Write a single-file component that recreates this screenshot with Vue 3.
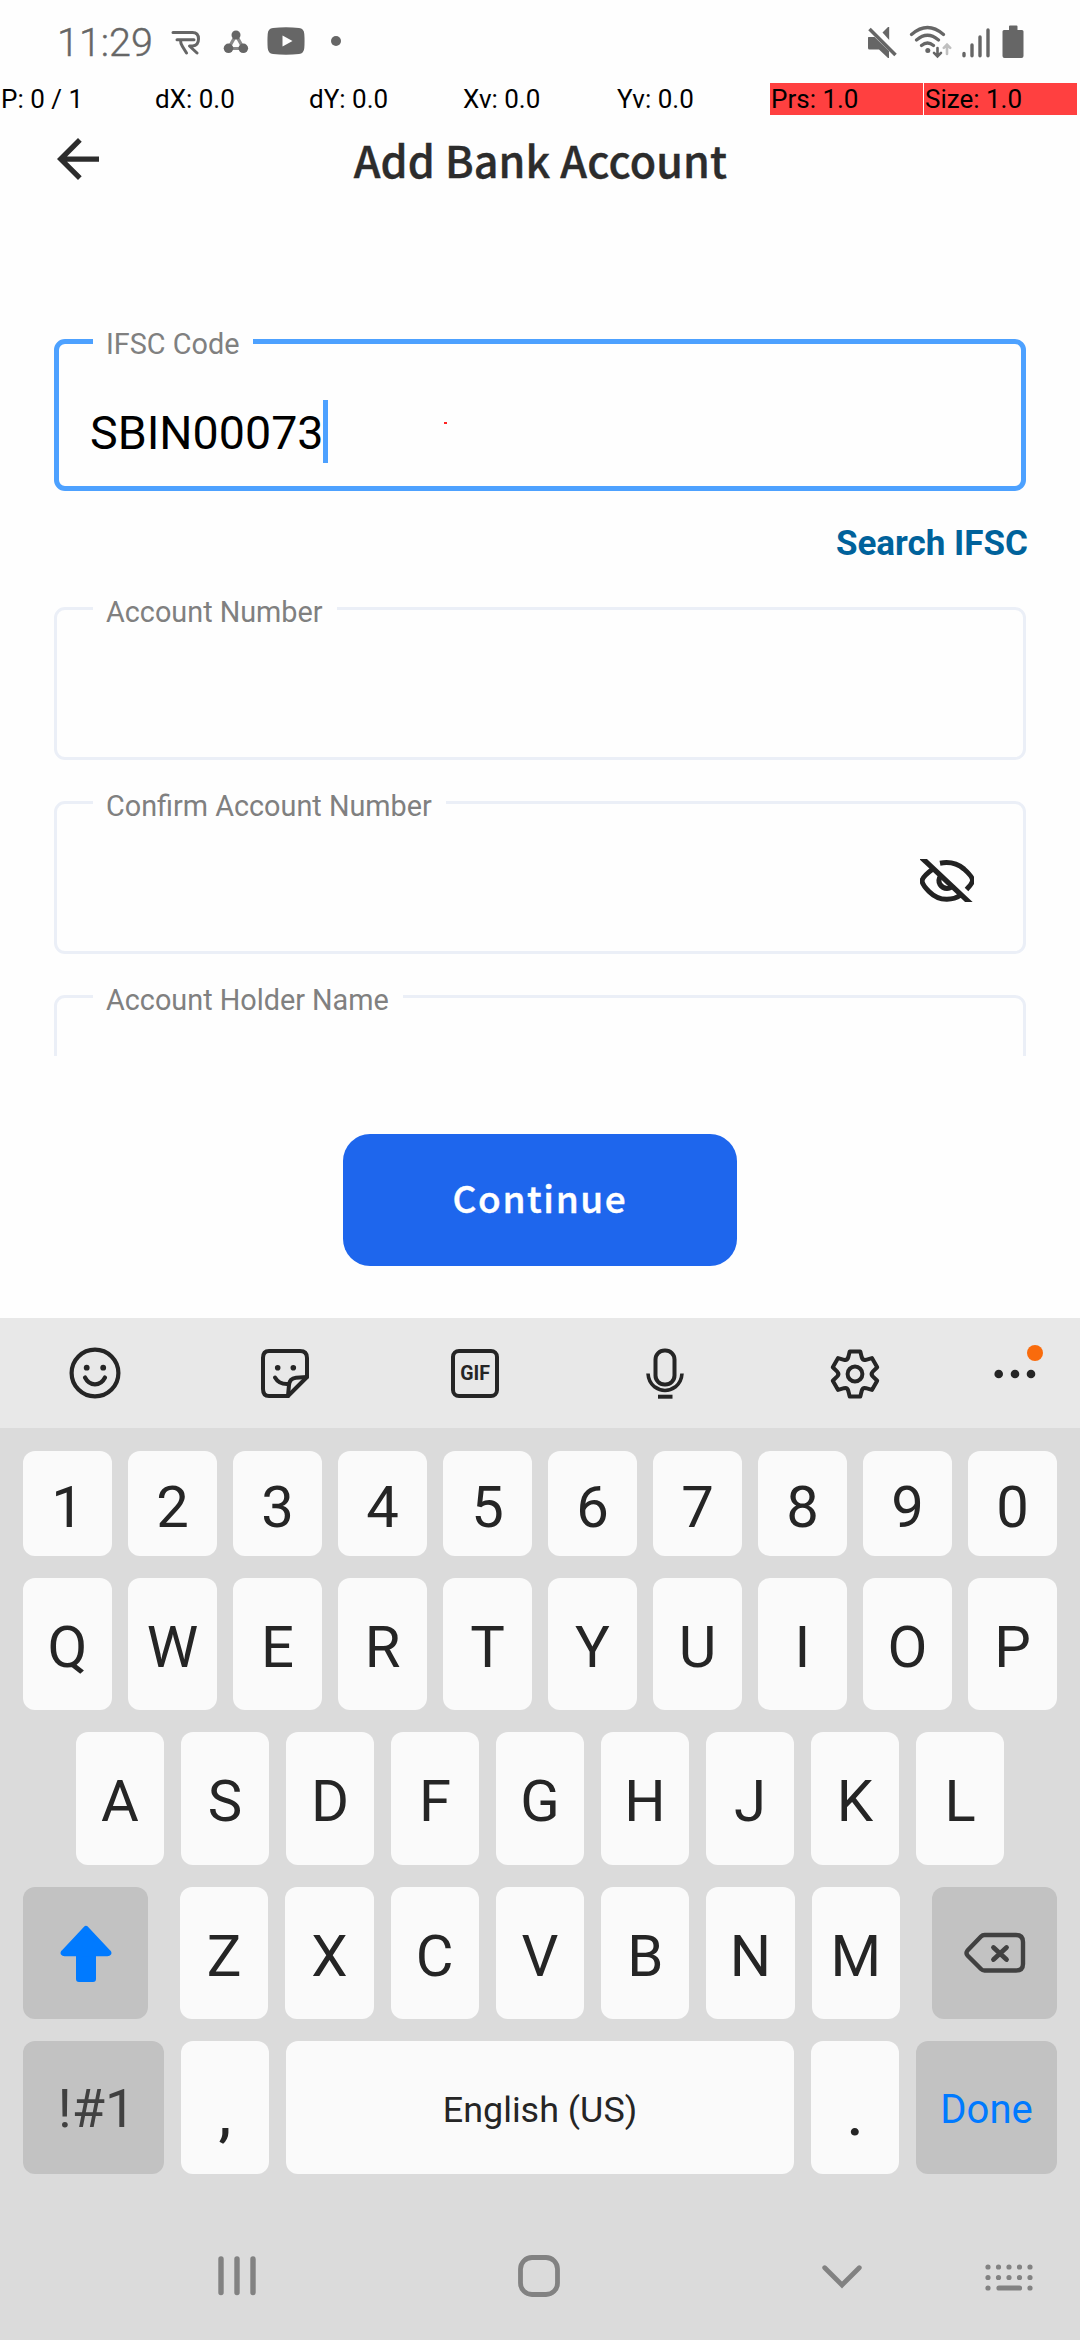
<script setup>
const debugCells = [
  { text: 'P: 0 / 1' },
  { text: 'dX: 0.0' },
  { text: 'dY: 0.0' },
  { text: 'Xv: 0.0' },
  { text: 'Yv: 0.0' },
  { text: 'Prs: 1.0', hot: true },
  { text: 'Size: 1.0', hot: true },
]

const digits = [...'1234567890']
const topRow = [...'QWERTYUIOP']
const homeRow = [...'ASDFGHJKL']
const lowerRow = [...'ZXCVBNM']

// Six-toothed gear outline, one tooth every 60 degrees around the origin
function gearPath() {
  const turn = ([x, y], deg) => {
    const a = (deg * Math.PI) / 180
    const px = x * Math.cos(a) - y * Math.sin(a)
    const py = x * Math.sin(a) + y * Math.cos(a)
    return `${px.toFixed(2)} ${py.toFixed(2)}`
  }
  let d = ''
  for (let i = 0; i < 6; i++) {
    const r = i * 60
    d += `${i ? 'L' : 'M'}${turn([-5.3, -22.6], r)}L${turn([5.3, -22.6], r)}`
    d += `L${turn([6.8, -16.6], r)}Q${turn([7.7, -13.4], r)} ${turn([-6.8, -16.6], r + 60)}`
  }
  return d + 'Z'
}
const gear = gearPath()
</script>

<template>
  <div class="screen">
    <header class="status">
      <span class="clock">11:29</span>
      <svg class="i-r" width="30" height="26" viewBox="0 0 30 26" fill="none" stroke="#666" stroke-width="3" stroke-linecap="round" stroke-linejoin="round">
        <path d="M2 3.500H21.500Q27.500 3.500 27.500 10T21.500 17H18.500L26 24M6 10.700H23M9.500 10.700Q9.500 15 11.500 17.500L15.500 24" />
      </svg>
      <svg class="i-share" width="26" height="24" viewBox="0 0 26 24">
        <path d="M13 5L5.500 18.500H20.500Z" fill="none" stroke="#8a8a8a" stroke-width="3.200" />
        <g fill="#666"><circle cx="13" cy="5" r="4.500" /><circle cx="5.500" cy="18.300" r="4.800" /><circle cx="20.300" cy="18.300" r="4.800" /></g>
      </svg>
      <svg class="i-yt" width="38" height="28" viewBox="0 0 38 28">
        <path d="M6 1Q19-.6 32 1Q37 1.500 37.300 7Q37.800 14 37.300 21Q37 26.500 32 27Q19 28.300 6 27Q1 26.500 .7 21Q.2 14 .7 7Q1 1.500 6 1Z" fill="#666" />
        <path d="M15.500 8.500V19.500L25.500 14Z" fill="#fefefe" />
      </svg>
      <i class="more-dot"></i>
      <svg class="i-mute" width="31" height="34" viewBox="0 0 31 34" fill="#666">
        <path d="M1.500 12H7.500L22 26V33H21L12 24.500H2.500Q1 24.500 1 23V13Q1 12 1.500 12Z" />
        <path d="M15.500 7.500L21 2H22.200V15Z" />
        <path d="M2.500 4L28.500 30" stroke="#666" stroke-width="3.600" />
      </svg>
      <svg class="i-wifi" width="43" height="34" viewBox="0 0 43 34" fill="none" stroke="#666" stroke-width="3.200" stroke-linecap="round">
        <path d="M2.500 9.500Q18.500-4.500 34.500 9.500M7.500 15Q18.500 5.500 29.500 15M12.500 20.500Q18.500 15.500 24.500 20.500" />
        <circle cx="18.800" cy="25.500" r="2.500" fill="#666" stroke="none" />
        <path d="M28.500 23V31M25 27.800L28.500 31.300L32 27.800" stroke-width="2.600" />
        <path d="M38 29V20M34.800 22.800L38 19.600L41.200 22.800" stroke="#c0c0c0" stroke-width="2.600" />
      </svg>
      <svg class="i-signal" width="28" height="32" viewBox="0 0 28 32" fill="none" stroke="#666" stroke-width="3.400" stroke-linecap="round">
        <path d="M2 26.500V28.700M10 18V28.700M18 10V28.700M26 3V28.700" />
      </svg>
      <svg class="i-batt" width="22" height="34" viewBox="0 0 22 34" fill="#666">
        <path d="M7 1.500Q7 .5 8 .5H14.500Q15.500 .5 15.500 1.500V5H20Q21.500 5 21.500 6.500V31Q21.500 33 19.500 33H2.500Q.5 33 .5 31V6.500Q.5 5 2 5H7Z" />
      </svg>
    </header>

    <div class="debug">
      <span v-for="c in debugCells" :key="c.text" :class="{ hot: c.hot }">{{ c.text }}</span>
    </div>

    <div class="titlebar">
      <svg class="back" width="42" height="42" viewBox="4 4 16 16" fill="#2c2c2c">
        <path d="M20 11H7.830l5.590-5.590L12 4l-8 8 8 8 1.410-1.410L7.830 13H20v-2z" />
      </svg>
      <h1>Add Bank Account</h1>
    </div>

    <main class="form">
      <div class="field active">
        <label>IFSC Code</label>
        <span class="value">SBIN00073</span><i class="caret"></i><i class="touch"></i>
      </div>
      <a class="search">Search IFSC</a>
      <div class="field"><label>Account Number</label></div>
      <div class="field">
        <label>Confirm Account Number</label>
        <svg class="eye" width="54" height="43" viewBox="0 0 54 43" fill="none" stroke="#222" stroke-width="5">
          <path d="M20 4.200Q34 1.500 44 10Q53 18 52.500 22Q52 25 46.500 30.500" />
          <path d="M13.500 9.500Q2 18 2 22Q2.500 26 9 32.500Q17 40.500 27 40.300Q35 40 40 36.500" />
          <path d="M21 16.500Q17.500 21 20 25.500Q23 30 28.500 29.300Q32 28.500 33 26" stroke-width="5" />
          <path d="M1-2L51 45" stroke-width="5.200" />
        </svg>
      </div>
      <div class="field"><label>Account Holder Name</label></div>
    </main>

    <div class="actions"><button class="continue">Continue</button></div>

    <section class="keyboard">
      <div class="tools">
        <div class="tool">
          <svg width="52" height="52" viewBox="-26 -26 52 52" fill="none" stroke="#252525" stroke-width="4.200" stroke-linecap="round">
            <circle r="23.400" />
            <path d="M-10 4.500Q-6.500 11.300 0 11.300T10 4.500" />
            <g fill="#252525" stroke="none"><circle cx="-8.300" cy="-5.300" r="2.900" /><circle cx="8.200" cy="-5.300" r="2.900" /></g>
          </svg>
        </div>
        <div class="tool">
          <svg width="52" height="52" viewBox="-26 -26 52 52" fill="none" stroke="#252525" stroke-width="4" stroke-linecap="round" stroke-linejoin="round">
            <path d="M-16-22H15Q22-22 22-15V4L3 23H-16Q-22 23-22 16V-15Q-22-22-16-22Z" />
            <path d="M22 4L11 4.800Q4.500 5.500 4 12L3 23" />
            <path d="M-10 4.500Q-6 11.500 3 11" />
            <g fill="#252525" stroke="none"><circle cx="-7.300" cy="-5.300" r="2.800" /><circle cx="8.300" cy="-5.300" r="2.800" /></g>
          </svg>
        </div>
        <div class="tool"><span class="gif">GIF</span></div>
        <div class="tool">
          <svg width="52" height="52" viewBox="-26 -26 52 52" fill="none" stroke="#252525" stroke-width="4">
            <rect x="-9.500" y="-22.500" width="19" height="34" rx="9" />
            <path d="M-17 .5Q-16.500 9-10.500 13.800Q-5.500 17.500 0 17.500T10.500 13.800Q16.500 9 17 .5" stroke-width="3.600" />
            <path d="M-7 23.700H7.500" />
          </svg>
        </div>
        <div class="tool">
          <svg class="gear" width="52" height="52" viewBox="-26 -26 52 52" fill="none" stroke="#252525" stroke-width="4" stroke-linejoin="round">
            <path :d="gear" /><circle r="7.400" />
          </svg>
        </div>
        <div class="tool last">
          <svg width="42" height="10" viewBox="-21 -5 42 10" fill="#252525"><circle cx="-16.300" r="4.300" /><circle r="4.300" /><circle cx="16" r="4.300" /></svg>
          <i class="badge"></i>
        </div>
      </div>

      <div class="keys">
        <div class="row nums"><span v-for="k in digits" :key="k" class="key">{{ k }}</span></div>
        <div class="row"><span v-for="k in topRow" :key="k" class="key">{{ k }}</span></div>
        <div class="row home"><span v-for="k in homeRow" :key="k" class="key">{{ k }}</span></div>
        <div class="row lower">
          <span class="key fn shift">
            <svg width="52" height="58" viewBox="0 0 52 58" fill="#007aff" stroke="#007aff" stroke-width="6" stroke-linejoin="round">
              <path d="M26 4L48 27.500Q49 28.200 47.500 28.200H4.500Q3 28.200 4 27.500ZM19 28H33V54H19Z" />
            </svg>
          </span>
          <div class="letters"><span v-for="k in lowerRow" :key="k" class="key">{{ k }}</span></div>
          <span class="key fn back-key">
            <svg width="62" height="42" viewBox="0 0 62 42" fill="none" stroke="#414141" stroke-width="4.400" stroke-linejoin="round" stroke-linecap="round">
              <path d="M20.500 3H52Q59 3 59 10V32Q59 38.500 52 38.500H20.500Q18.500 38.500 17 37L3.500 23.500Q1.500 21 3.500 18.500L17 4.500Q18.500 3 20.500 3Z" />
              <path d="M29.500 15.500L42.500 27.500M42.500 15.500L29.500 27.500" stroke-width="4.800" />
            </svg>
          </span>
        </div>
        <div class="row bottom">
          <span class="key fn sym">!#1</span>
          <span class="key punct">,</span>
          <span class="key space">English (US)</span>
          <span class="key punct">.</span>
          <span class="key fn done">Done</span>
        </div>
      </div>

      <nav class="nav">
        <svg class="n-recents" width="38" height="42" viewBox="0 0 38 42" fill="none" stroke="#828282" stroke-width="5.400" stroke-linecap="round"><path d="M3 4V37.500M19 4V37.500M35 4V37.500" /></svg>
        <svg class="n-home" width="42" height="42" viewBox="0 0 42 42" fill="none" stroke="#828282" stroke-width="4.800"><rect x="2.500" y="2.500" width="37" height="37" rx="11.500" /></svg>
        <svg class="n-down" width="40" height="24" viewBox="0 0 40 24" fill="none" stroke="#828282" stroke-width="4.800" stroke-linecap="round"><path d="M2.700 2.700L20 20L37.300 2.700" /></svg>
        <svg class="n-kb" width="48" height="27" viewBox="0 0 48 27" fill="none" stroke="#828282" stroke-width="5.200" stroke-linecap="round">
          <path d="M3 3h0M13.500 3h0M24 3h0M34.500 3h0M45 3h0M3 13.500h0M13.500 13.500h0M24 13.500h0M34.500 13.500h0M45 13.500h0M3 24h0M14 24H34.500M45 24h0" />
        </svg>
      </nav>
    </section>
  </div>
</template>

<style>
body { background: #fefefe; }
</style>

<style scoped>
.screen {
  width: 1080px;
  height: 2340px;
  overflow: hidden;
  display: flex;
  flex-direction: column;
  background: #fefefe;
  font-family: Roboto, "Noto Sans", sans-serif;
  color: #000;
}
svg { display: block; flex: none; }

.status { height: 83px; display: flex; align-items: flex-start; flex: none; }
.clock { width: 114px; margin-left: 57px; padding-top: 20px; font-size: 39.500px; line-height: 46px; font-weight: 300; color: #666; white-space: nowrap; -webkit-text-stroke: .4px #666; }
.i-r { margin-top: 29px; }
.i-share { margin: 30px 0 0 22px; }
.i-yt { margin: 27px 0 0 18px; }
.more-dot { width: 10px; height: 10px; margin: 36px auto 0 26px; border-radius: 50%; background: #666; }
.i-mute { margin-top: 25px; }
.i-wifi { margin: 25px 0 0 11px; }
.i-signal { margin: 27px 0 0 10px; }
.i-batt { margin: 25px 56px 0 12px; }

.debug { height: 32px; display: flex; gap: 1px; flex: none; }
.debug span { width: 153px; padding-left: 1px; box-sizing: border-box; font-size: 26px; line-height: 32px; white-space: nowrap; }
.debug .hot { background: #ff4040; }

.titlebar { height: 224px; display: flex; align-items: flex-start; flex: none; }
.back { margin: 23px 0 0 57px; }
h1 { flex: 1; margin: 12px 98px 0 0; text-align: center; font: 500 43px/64px "Noto Sans CJK SC", sans-serif; letter-spacing: .15px; color: #2c2c2c; -webkit-text-stroke: .4px #2c2c2c; }

.form { height: 717px; padding: 20px 54px 0; margin-top: -20px; overflow: hidden; display: flex; flex-direction: column; flex: none; }
.field { position: relative; box-sizing: border-box; height: 153px; flex: none; margin-bottom: 41px; border: 3px solid #ebeff7; border-radius: 11px; display: flex; align-items: center; }
.field label { position: absolute; left: 36px; top: -15px; padding: 0 14px 0 13px; background: #fefefe; font-size: 28.800px; line-height: 34px; color: #808080; white-space: nowrap; }
.field.active { height: 152px; border: 5px solid #4da1ff; margin-bottom: 0; }
.field.active label { left: 34px; top: -17px; }
.value { width: 233px; margin: 36px 0 0 31px; font-size: 46.600px; line-height: 54px; }
.caret { width: 5px; height: 63px; margin: 32px 0 0; background: #4da1ff; }
.touch { width: 3px; height: 2px; margin: 15px 0 0 116px; background: #f22; }
.search { height: 116px; flex: none; box-sizing: border-box; padding-top: 32px; margin-right: -2px; text-align: right; font-size: 35px; line-height: 42px; font-weight: 700; color: #00629b; }
.eye { margin: 5px 49px 0 auto; overflow: hidden; }

.actions { height: 262px; display: flex; justify-content: center; align-items: flex-start; flex: none; }
.continue { width: 394px; height: 132px; margin-top: 78px; padding: 0 0 5px; border: 0; border-radius: 27px; background: #1e66ed; color: #fff; font: 500 37px/127px "Noto Sans CJK SC", sans-serif; letter-spacing: 1.600px; -webkit-text-stroke: .4px #fff; }

.keyboard { flex: 1; background: #dbdbdb; color: #252525; }
.tools { height: 110px; display: flex; background: #e8e8e8; }
.tool { position: relative; width: 190px; display: flex; align-items: center; justify-content: center; }
.tool.last { width: 130px; padding-top: 2px; box-sizing: border-box; }
.gear { margin-top: 2px; }
.gif { box-sizing: border-box; width: 48px; height: 49px; border: 4px solid #252525; border-radius: 8px; text-align: center; font-size: 19.500px; line-height: 42px; font-weight: 700; }
.badge { position: absolute; left: 77px; top: 27px; width: 16px; height: 16px; border-radius: 50%; background: #f96b0c; }

.keys { padding: 23px 23px 0; display: flex; flex-direction: column; gap: 22px; }
.row { display: flex; gap: 16px; height: 132px; }
.row.nums { height: 105px; }
.row.home { height: 133px; gap: 17px; padding: 0 53px; }
.row.lower { gap: 32px; }
.row.bottom { height: 133px; gap: 17px; }
.letters { flex: 1; display: flex; gap: 17px; }
.key { flex: 1 1 0; min-width: 0; box-sizing: border-box; display: flex; align-items: center; justify-content: center; padding-top: 5px; border-radius: 12px; background: #fafafa; font-size: 58px; line-height: 68px; white-space: nowrap; }
.nums .key { padding-top: 6px; }
.fn { background: #c2c2c2; color: #414141; }
.shift { flex: 0 0 125px; padding-top: 2px; }
.back-key { flex: 0 0 125px; padding-top: 0; }
.sym { flex: 0 0 141px; font-size: 54px; padding: 2px 0 0 6px; }
.punct { flex: 0 0 88px; padding-top: 14px; font-weight: 500; }
.space { font-size: 35.900px; padding-top: 5px; }
.done { flex: 0 0 141px; font-size: 40px; color: #007aff; padding-top: 4px; }

.nav { height: 166px; display: flex; align-items: flex-start; }
.n-recents { margin: 81px 0 0 218px; }
.n-home { margin: 81px 0 0 262px; }
.n-down { margin: 91px 0 0 262px; }
.n-kb { margin: 90px 0 0 123px; }
</style>
